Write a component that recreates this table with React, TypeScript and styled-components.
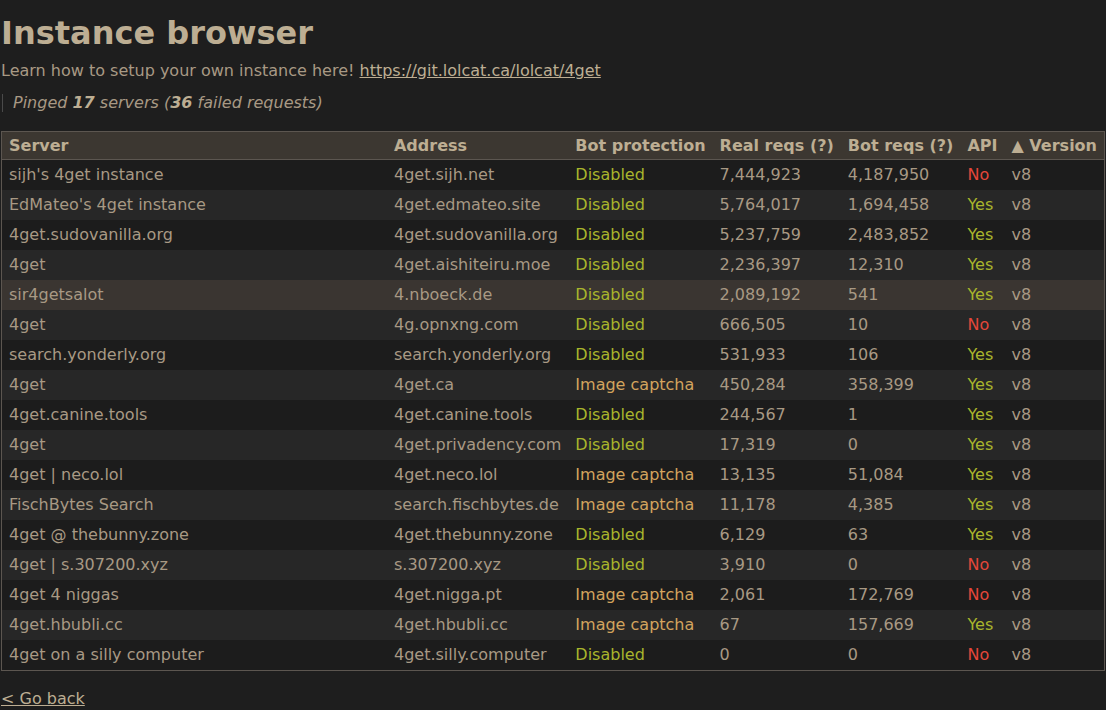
import React from "react";
import styled, { createGlobalStyle } from "styled-components";

const Global = createGlobalStyle`
  html, body {
    margin: 0;
    padding: 0;
    background: #1e1e1e;
  }
  body {
    font-family: "DejaVu Sans", "Liberation Sans", sans-serif;
    font-size: 16px;
    color: #a89984;
  }
`;

const Page = styled.div`
  padding: 0 1px;
`;

const Title = styled.h1`
  margin: 14px 0 0 0;
  font-size: 32px;
  line-height: 38px;
  font-weight: bold;
  color: #bdae93;
`;

const Lead = styled.div`
  margin-top: 10px;
  line-height: 18px;
`;

const Link = styled.a`
  color: #bdae93;
  text-decoration: underline;
`;

const Quote = styled.blockquote`
  margin: 14px 0 0 1px;
  padding: 0 0 0 10px;
  border-left: 1px solid #4a4a4a;
  font-style: italic;
  line-height: 18px;
`;

const Strong = styled.b`
  color: #bdae93;
`;

const Table = styled.table`
  margin-top: 19px;
  width: 100%;
  border-collapse: collapse;
  border: 1px solid #5c5650;
`;

const HeadRow = styled.tr`
  background: #3c3731;
  border-bottom: 1px solid #5c5650;
`;

const Th = styled.th<{ $grow?: boolean }>`
  text-align: left;
  padding: 5px 7px 4px 7px;
  font-weight: bold;
  color: #bdae93;
  white-space: nowrap;
  line-height: 18px;
  width: ${(p) => (p.$grow ? "auto" : "1%")};
`;

const Row = styled.tr<{ $alt: boolean; $hl?: boolean }>`
  background: ${(p) => (p.$hl ? "#3a3531" : p.$alt ? "#272727" : "#1c1c1c")};
`;

const Td = styled.td<{ $tone?: string }>`
  padding: 6px 7px;
  line-height: 18px;
  white-space: nowrap;
  color: ${(p) => p.$tone ?? "#a89984"};
`;

const Back = styled.a`
  display: inline-block;
  margin-top: 19px;
  color: #bdae93;
  text-decoration: underline;
  line-height: 18px;
`;

const GREEN = "#a9b52c";
const ORANGE = "#d3a45e";
const RED = "#e4473a";

type Inst = [string, string, boolean, string, string, boolean];

const data: Inst[] = [
  ["sijh's 4get instance", "4get.sijh.net", false, "7,444,923", "4,187,950", false],
  ["EdMateo's 4get instance", "4get.edmateo.site", false, "5,764,017", "1,694,458", true],
  ["4get.sudovanilla.org", "4get.sudovanilla.org", false, "5,237,759", "2,483,852", true],
  ["4get", "4get.aishiteiru.moe", false, "2,236,397", "12,310", true],
  ["sir4getsalot", "4.nboeck.de", false, "2,089,192", "541", true],
  ["4get", "4g.opnxng.com", false, "666,505", "10", false],
  ["search.yonderly.org", "search.yonderly.org", false, "531,933", "106", true],
  ["4get", "4get.ca", true, "450,284", "358,399", true],
  ["4get.canine.tools", "4get.canine.tools", false, "244,567", "1", true],
  ["4get", "4get.privadency.com", false, "17,319", "0", true],
  ["4get | neco.lol", "4get.neco.lol", true, "13,135", "51,084", true],
  ["FischBytes Search", "search.fischbytes.de", true, "11,178", "4,385", true],
  ["4get @ thebunny.zone", "4get.thebunny.zone", false, "6,129", "63", true],
  ["4get | s.307200.xyz", "s.307200.xyz", false, "3,910", "0", false],
  ["4get 4 niggas", "4get.nigga.pt", true, "2,061", "172,769", false],
  ["4get.hbubli.cc", "4get.hbubli.cc", true, "67", "157,669", true],
  ["4get on a silly computer", "4get.silly.computer", false, "0", "0", false],
];

export default function App() {
  return (
    <Page>
      <Global />
      <Title>Instance browser</Title>
      <Lead>
        Learn how to setup your own instance here!{" "}
        <Link href="#">https://git.lolcat.ca/lolcat/4get</Link>
      </Lead>
      <Quote>
        Pinged <Strong>17</Strong> servers (<Strong>36</Strong> failed requests)
      </Quote>
      <Table>
        <thead>
          <HeadRow>
            <Th $grow>Server</Th>
            <Th>Address</Th>
            <Th>Bot protection</Th>
            <Th>Real reqs (?)</Th>
            <Th>Bot reqs (?)</Th>
            <Th>API</Th>
            <Th>▲ Version</Th>
          </HeadRow>
        </thead>
        <tbody>
          {data.map((d, i) => (
            <Row key={i} $alt={i % 2 === 1} $hl={i === 4}>
              <Td>{d[0]}</Td>
              <Td>{d[1]}</Td>
              <Td $tone={d[2] ? ORANGE : GREEN}>{d[2] ? "Image captcha" : "Disabled"}</Td>
              <Td>{d[3]}</Td>
              <Td>{d[4]}</Td>
              <Td $tone={d[5] ? GREEN : RED}>{d[5] ? "Yes" : "No"}</Td>
              <Td>v8</Td>
            </Row>
          ))}
        </tbody>
      </Table>
      <Back href="#">&lt; Go back</Back>
    </Page>
  );
}
